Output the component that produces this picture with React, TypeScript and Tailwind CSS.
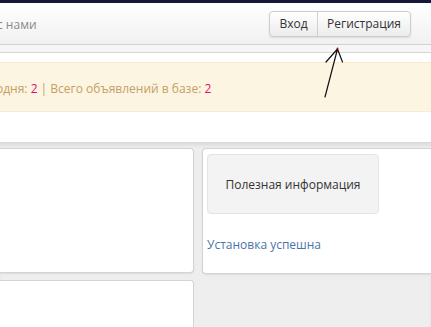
export default function App() {
  return (
    <div className="relative w-[431px] h-[327px] overflow-hidden bg-white font-['Open_Sans',sans-serif] text-[12px]">
      <div className="h-[3px] bg-[#17173b]" />

      {/* header */}
      <div className="h-[42px] flex items-center justify-between bg-gradient-to-b from-white to-[#f1f1f1] border-b border-[#d2d2d2]">
        <div className="-ml-[3px] text-[#8a8a8a] whitespace-nowrap pt-[3px]">с нами</div>
        <div className="mr-[20px] flex h-[26px] rounded-[4px] border border-[#cdcdcd] bg-gradient-to-b from-white to-[#ececec] shadow-[0_1px_2px_rgba(0,0,0,0.1)] text-[#333]">
          <button className="w-[48px] border-r border-[#d0d0d0] pt-[1px]">Вход</button>
          <button className="w-[92px] pt-[1px]">Регистрация</button>
        </div>
      </div>
      <div className="h-[8px] bg-[#f6f6f6] border-b border-[#d6d6d6]" />

      {/* stats */}
      <div className="mt-[9px] h-[50px] flex items-center bg-[#fcf5e2] border-y border-[#f8ecd0] text-[#c4a064] whitespace-nowrap pt-[3px]">
        <span className="-ml-[4px]">одня: <span className="text-[#ea0a6e]">2</span> | Всего объявлений в базе: <span className="text-[#ea0a6e]">2</span></span>
      </div>

      {/* content */}
      <div className="mt-[30px] h-[200px] bg-[#eeeeee] border-t border-[#d8d8d8] shadow-[inset_0_3px_3px_rgba(0,0,0,0.06)] pt-[5px]">
        <div className="flex gap-[8px]">
          <div className="w-[194px] flex flex-col gap-[7px]">
            <div className="h-[125px] bg-white border border-l-0 border-[#d3d3d3] rounded-r-[4px] shadow-[0_1px_2px_rgba(0,0,0,0.08)]" />
            <div className="h-[80px] bg-white border border-l-0 border-[#d3d3d3] rounded-tr-[4px]" />
          </div>
          <div className="flex-1 h-[126px] bg-white border border-r-0 border-[#d3d3d3] rounded-l-[4px] shadow-[0_1px_2px_rgba(0,0,0,0.08)] pl-[4px] pt-[5px]">
            <div className="w-[172px] h-[60px] flex items-center justify-center bg-[#f3f3f3] border border-[#e4e4e4] rounded-[4px] text-[#333] pt-[2px]">
              Полезная информация
            </div>
            <a href="#" className="block mt-[22px] text-[#4a74a8]">Установка успешна</a>
          </div>
        </div>
      </div>

      {/* arrow */}
      <svg className="absolute left-0 top-0 pointer-events-none" width="431" height="327">
        <path d="M325 97 L337.5 49 M337.5 49 L326 62 M337.5 49 L342.5 62" stroke="#111" strokeWidth="1.2" fill="none" strokeLinecap="round" />
        <circle cx="337.5" cy="48.5" r="1" fill="#d00" />
      </svg>
    </div>
  );
}
